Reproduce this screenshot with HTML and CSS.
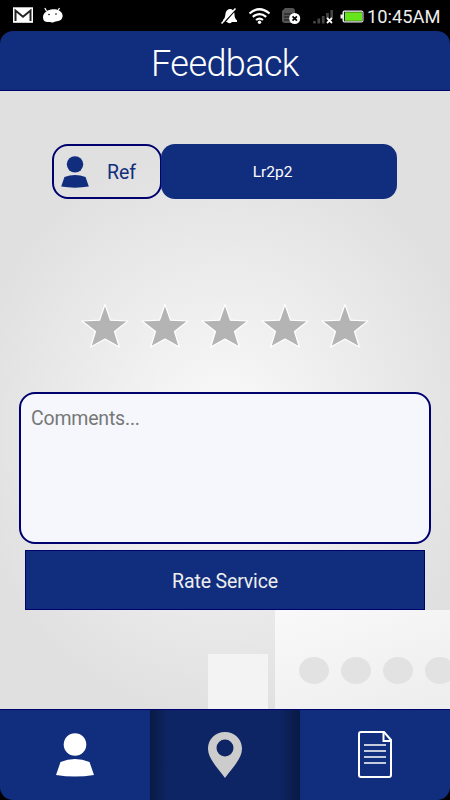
FILE: index.html
```html
<!DOCTYPE html>
<html lang="en">
<head>
    <meta charset="UTF-8">
    <meta name="viewport" content="width=device-width, initial-scale=1.0">
    <title>Feedback</title>
    <link rel="stylesheet" href="styles.css">
</head>
<body>

    <!-- Status bar -->
    <div class="status-bar">
        <svg class="status-icons" width="80" height="31" viewBox="0 0 80 31">
            <rect x="13" y="7.3" width="20" height="15.5" fill="#fff"/>
            <path d="M15.500 21V10.500l7.500 6.200 7.500-6.200V21" fill="none" stroke="#222" stroke-width="2"/>
            <g fill="#fff">
                <path d="M43 17.500c0-4 3-7 8-8 5-1 10 1 11.300 4.500 1.200 4-1.300 7-5.300 7.300-2 0-2.500 1.200-4.500 1.200-1.500 0-2-.8-3.500-.5-3.500.5-6-1-6-4.500z"/>
                <path d="M46.500 11l-1.700-3M58 10.500l1.500-2.500" stroke="#fff" stroke-width="1.300"/>
            </g>
            <circle cx="49" cy="14.500" r=".8"/>
            <circle cx="56" cy="14" r=".8"/>
        </svg>
        <svg class="status-icons" width="155" height="31" viewBox="212 0 155 31">
            <!-- Muted bell -->
            <path d="M223 20c2-2 2-3 2.500-6.500 .5-3 2.500-4.500 4.500-4.500S234.500 11 234.500 14c0 3 .5 4.500 2.500 6.500V22H223zM227 22h5q-2.500 2.500-5 0z" fill="#fff"/>
            <path d="M223.500 23.500l13-15" stroke="#000" stroke-width="1.500"/>
            <path d="M221.500 23.500l14-15" stroke="#fff" stroke-width="1.500"/>
            <!-- Wifi -->
            <g fill="none" stroke="#fff" stroke-width="2.200">
                <path d="M249.500 13.500q10-8.500 20 0"/>
                <path d="M252.800 16.800q6.700-5.500 13.400 0"/>
                <path d="M256 20q3.500-2.700 7 0"/>
            </g>
            <circle cx="259.500" cy="22.200" r="1.700" fill="#fff"/>
            <!-- Sim -->
            <path d="M282 11l3-3h7q3 0 3 3v9q0 3-3 3h-7q-3 0-3-3z" fill="#555"/>
            <path d="M284 14h8M284 17h8M284 20h6" stroke="#111"/>
            <circle cx="294.700" cy="18.500" r="5.500" fill="#fff"/>
            <path d="M292.500 16.300l4.400 4.400M296.900 16.300l-4.400 4.400" stroke="#000" stroke-width="1.700"/>
            <!-- Signal -->
            <path d="M314.500 21v2.500M318.800 18.500v5M323.200 16v7.500M327.500 13v5M331.700 10v8" stroke="#444" stroke-width="2.700"/>
            <path d="M327 18l5 5M332 18l-5 5" stroke="#fff" stroke-width="1.800"/>
            <!-- Battery -->
            <path d="M340.500 14.500h2v-2q0-2 2-2h17q2 0 2 2v8q0 2-2 2h-17q-2 0-2-2v-2h-2z" fill="#eee"/>
            <rect x="344" y="11.800" width="18.500" height="9.500" fill="#222"/>
            <rect x="345" y="12.300" width="17" height="8.500" fill="#66e51c"/>
        </svg>
        <span class="clock">10:45AM</span>
    </div>

    <div class="app">
        <header class="header">
            <h1>Feedback</h1>
        </header>

        <main class="content">
            <!-- Building in the background -->
            <div class="building">
                <div class="door"></div>
                <div class="wall">
                    <span class="window"></span>
                    <span class="window"></span>
                    <span class="window"></span>
                    <span class="window"></span>
                </div>
            </div>

            <div class="ref-row">
                <div class="ref-label">
                    <svg class="ref-icon" width="28" height="32" viewBox="0 0 38 44">
                        <circle cx="19" cy="11.500" r="11.300"/>
                        <path d="M4.500 29q14.500-6 29 0L38 42q-19 3-38 0z"/>
                    </svg>
                    <span>Ref</span>
                </div>
                <div class="ref-value">Lr2p2</div>
            </div>

            <div class="stars">
                <svg class="star" viewBox="0 0 48 46"><path d="M24 1.500l5.500 15.700L47 18 33.500 28.500l4.800 15.500L24 36 9.700 44l4.800-15.500L1 18l17.500-.8z"/></svg>
                <svg class="star" viewBox="0 0 48 46"><path d="M24 1.500l5.500 15.700L47 18 33.500 28.500l4.800 15.500L24 36 9.700 44l4.800-15.500L1 18l17.500-.8z"/></svg>
                <svg class="star" viewBox="0 0 48 46"><path d="M24 1.500l5.500 15.700L47 18 33.500 28.500l4.800 15.500L24 36 9.700 44l4.800-15.500L1 18l17.500-.8z"/></svg>
                <svg class="star" viewBox="0 0 48 46"><path d="M24 1.500l5.500 15.700L47 18 33.500 28.500l4.800 15.500L24 36 9.700 44l4.800-15.500L1 18l17.500-.8z"/></svg>
                <svg class="star" viewBox="0 0 48 46"><path d="M24 1.500l5.500 15.700L47 18 33.500 28.500l4.800 15.500L24 36 9.700 44l4.800-15.500L1 18l17.500-.8z"/></svg>
            </div>

            <div class="comments">Comments...</div>
            <button class="rate-button">Rate Service</button>
        </main>

        <nav class="tabs">
            <div class="tab">
                <svg width="38" height="45" viewBox="0 0 38 45" fill="#fff">
                    <circle cx="19" cy="11.500" r="11.300"/>
                    <path d="M4.500 29q14.500-6 29 0L38 42q-19 3-38 0z"/>
                </svg>
            </div>
            <div class="tab active">
                <svg width="34" height="46" viewBox="0 0 34 46">
                    <path d="M17 0C7.500 0 0 7.300 0 16.500 0 26 8 34 17 46c9-12 17-20 17-29.500C34 7.300 26.500 0 17 0zm0 7.500a8.500 8.500 0 1 1 0 17 8.500 8.500 0 0 1 0-17z" fill="#ccc"/>
                </svg>
            </div>
            <div class="tab">
                <svg width="34" height="48" viewBox="0 0 34 48" fill="none" stroke="#fff" stroke-width="2">
                    <path d="M3 1h23l7 8v35q0 2-2 2H3q-2 0-2-2V3q0-2 2-2z"/>
                    <path d="M25.500 1v9H33"/>
                    <path d="M6 14h22M6 20h22M6 26h22M6 32h22" stroke-width="1.700"/>
                </svg>
            </div>
        </nav>
    </div>

</body>
</html>
```

FILE: styles.css
```css
body {
    margin: 0;
    width: 450px;
    height: 800px;
    background-color: #000;
    font-family: Roboto, sans-serif;
    overflow: hidden;
}

.status-bar {
    display: flex;
    height: 31px;
}

.status-icons + .status-icons {
    margin-left: 132px;
}

.clock {
    color: #eee;
    font-size: 18.3px;
    line-height: 34px;
    white-space: nowrap;
}

.app {
    display: flex;
    flex-direction: column;
    height: 769px;
    border-radius: 13px;
    overflow: hidden;
}

.header {
    box-sizing: border-box;
    height: 60px;
    background-color: #112d7d;
    border-bottom: 1px solid #00006e;
    text-align: center;
}

.header h1 {
    margin: 0;
    color: #fff;
    font-size: 36px;
    font-weight: 300;
    letter-spacing: -0.6px;
    line-height: 66px;
}

.content {
    position: relative;
    box-sizing: border-box;
    height: 618px;
    padding: 53px 19px 0;
    background: radial-gradient(ellipse 260px 290px at 225px 340px, #fafafa, #e0e0e0);
}

.building {
    position: absolute;
    right: 0;
    bottom: 0;
    display: flex;
    align-items: flex-end;
}

.door {
    width: 60px;
    height: 55px;
    margin-right: 7px;
    background-color: #f3f3f3;
}

.wall {
    display: flex;
    gap: 12px;
    box-sizing: border-box;
    width: 175px;
    height: 99px;
    padding: 47px 0 0 24px;
    background: linear-gradient(160deg, #f9f9f9, #ededed);
    overflow: hidden;
}

.window {
    flex: none;
    width: 30px;
    height: 27px;
    border-radius: 50%;
    background-color: #e2e2e2;
}

.ref-row {
    display: flex;
    width: 345px;
    height: 55px;
    margin-left: 33px;
}

.ref-label {
    display: flex;
    align-items: center;
    box-sizing: border-box;
    width: 110px;
    border: 2px solid #00006e;
    border-radius: 16px;
    color: #112d7d;
    font-size: 19.5px;
    line-height: 26px;
}

.ref-label span {
    padding-top: 2px;
}

.ref-icon {
    margin: 0 18px 0 7px;
    fill: #112d7d;
}

.ref-value {
    flex: 1;
    box-sizing: border-box;
    margin-left: -1px;
    padding-right: 13px;
    border-radius: 14px;
    background-color: #112d7d;
    color: #fff;
    font-size: 15.5px;
    line-height: 57px;
    text-align: center;
}

.stars {
    display: flex;
    gap: 12px;
    margin: 104px 0 0 62px;
}

.star {
    width: 48px;
    height: 46px;
    fill: #b4b4b4;
    stroke: #fff;
    stroke-width: 1.2;
    stroke-linejoin: round;
}

.comments {
    box-sizing: border-box;
    height: 152px;
    margin-top: 43px;
    padding: 12px 10px;
    border: 2px solid #00006e;
    border-radius: 16px;
    background-color: #f5f7fc;
    color: #777;
    font-size: 19.5px;
    letter-spacing: -0.2px;
    line-height: 26px;
}

.rate-button {
    position: relative;
    display: block;
    width: 400px;
    height: 60px;
    margin: 6px 0 0 6px;
    padding: 2px 0 0;
    border: 1px solid #00006e;
    background-color: #112d7d;
    color: #eee;
    font-family: inherit;
    font-size: 19.5px;
    letter-spacing: -0.15px;
}

.tabs {
    display: flex;
    flex: 1;
}

.tab {
    display: flex;
    flex: 1;
    align-items: center;
    justify-content: center;
    box-sizing: border-box;
    border-top: 1px solid #00006e;
    background-color: #112d7d;
}

.tab.active {
    background: linear-gradient(90deg, #091a42, #0d2565 12%, #0d2565 86%, #091a42);
}
```
